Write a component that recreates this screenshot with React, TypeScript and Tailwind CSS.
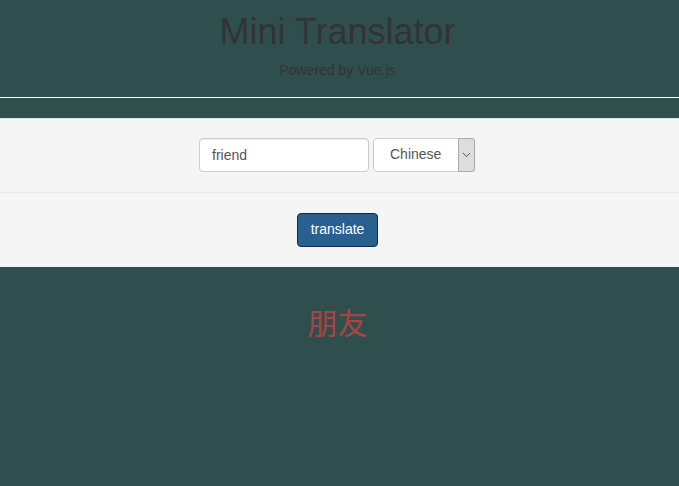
import React from "react";

export default function App() {
  return (
    <div
      className="min-h-[486px] w-full bg-[#2f4f4f] text-[#333]"
      style={{ fontFamily: '"Liberation Sans", Arial, "Noto Sans CJK SC", sans-serif' }}
    >
      <div className="pr-[4px] pt-[12px] text-center">
        <h1 className="text-[36px] leading-[39.6px] font-normal text-[#333]">Mini Translator</h1>
        <p className="mt-[8px] text-[14px] leading-[20px] text-[#333]">Powered by Vue.js</p>
      </div>
      <div className="mt-[17px] h-px w-full bg-white" />
      <div className="mt-[20px] border-t border-[#e3e3e3] bg-[#f5f5f5]">
        <div className="flex justify-center gap-[4px] pr-[5px] pt-[19px] pb-[20px]">
          <input
            defaultValue="friend"
            className="h-[34px] w-[170px] rounded-[4px] border border-[#ccc] bg-white px-[12px] text-[14px] text-[#555] outline-none shadow-[inset_0_1px_1px_rgba(0,0,0,0.075)]"
          />
          <div className="flex h-[34px] w-[102px] items-stretch rounded-[4px] border border-[#ccc] bg-white text-[14px] text-[#555]">
            <div className="flex flex-1 items-center pl-[16px]">Chinese</div>
            <div className="flex w-[17px] items-center justify-center rounded-r-[3px] border border-[#aaa] -my-px -mr-px bg-[#dddddd]">
              <svg width="9" height="6" viewBox="0 0 9 6">
                <path d="M1 1 L4.5 4.5 L8 1" fill="none" stroke="#555" strokeWidth="1" />
              </svg>
            </div>
          </div>
        </div>
        <div className="flex justify-center border-t border-[#e8e8e8] pr-[4px] pt-[20px] pb-[20px]">
          <button className="h-[34px] rounded-[4px] border border-[#122b40] bg-[#286090] px-[13px] text-[14px] text-white">
            translate
          </button>
        </div>
      </div>
      <div
        className="mt-[38px] pr-[4px] text-center text-[30px] leading-[33px] text-[#a94442]"
        style={{ fontFamily: '"Noto Sans CJK SC", "Liberation Sans", sans-serif' }}
      >
        朋友
      </div>
    </div>
  );
}
